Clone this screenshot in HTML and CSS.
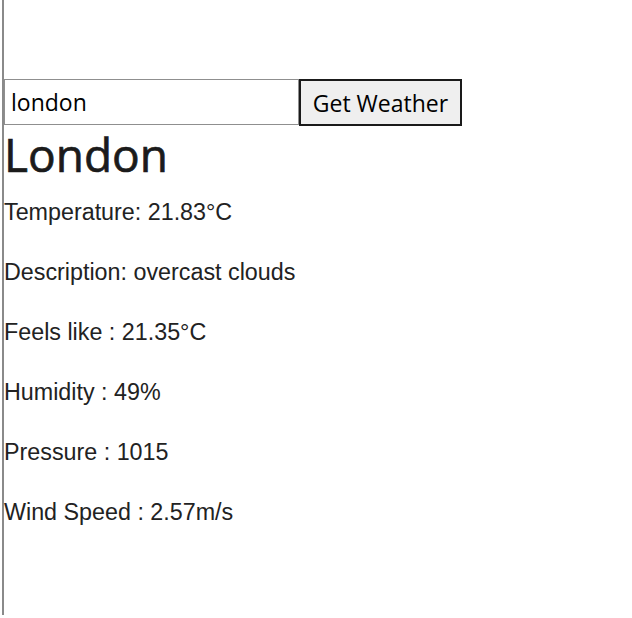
FILE: index.html
```html
<!DOCTYPE html>
<html>
<head>
<meta charset="utf-8">
<link rel="stylesheet" href="styles.css">
</head>
<body>
<div class="page">
  <form class="search">
    <input class="city" type="text" value="london">
    <button class="go" type="button">Get Weather</button>
  </form>
  <h1 class="city-name">London</h1>
  <div class="details">
    <p>Temperature: 21.83°C</p>
    <p>Description: overcast clouds</p>
    <p>Feels like : 21.35°C</p>
    <p>Humidity : 49%</p>
    <p>Pressure : 1015</p>
    <p>Wind Speed : 2.57m/s</p>
  </div>
</div>
</body>
</html>
```
FILE: styles.css
```css
html, body {
  margin: 0;
  padding: 0;
  background: #ffffff;
}
.page {
  margin-left: 2px;
  border-left: 2px solid #8a8a8a;
  height: 615px;
  box-sizing: border-box;
  padding-top: 79px;
}
.search {
  display: flex;
  margin: 0;
}
.city {
  box-sizing: border-box;
  width: 295px;
  height: 46px;
  margin: 0;
  border: 1px solid #8f8f8f;
  padding: 0 0 0 6px;
  font-family: "Open Sans", "Noto Sans", sans-serif;
  font-size: 23px;
  color: #000;
  outline: none;
}
.go {
  box-sizing: border-box;
  width: 163px;
  height: 47px;
  margin: 0;
  border: 2px solid #1a1a1a;
  background: #efefef;
  padding: 0;
  font-family: "Open Sans", "Noto Sans", sans-serif;
  font-size: 23px;
  color: #000;
}
.city-name {
  margin: 0;
  font-family: "Open Sans", "Noto Sans", sans-serif;
  font-weight: 400;
  font-size: 46px;
  line-height: 56px;
  color: #1b1b1b;
  -webkit-text-stroke: 0.7px #1b1b1b;
}
.details p {
  margin: 0;
  font-family: "Liberation Sans", Arial, sans-serif;
  font-size: 23.3px;
  line-height: 60px;
  color: #222;
}
```
